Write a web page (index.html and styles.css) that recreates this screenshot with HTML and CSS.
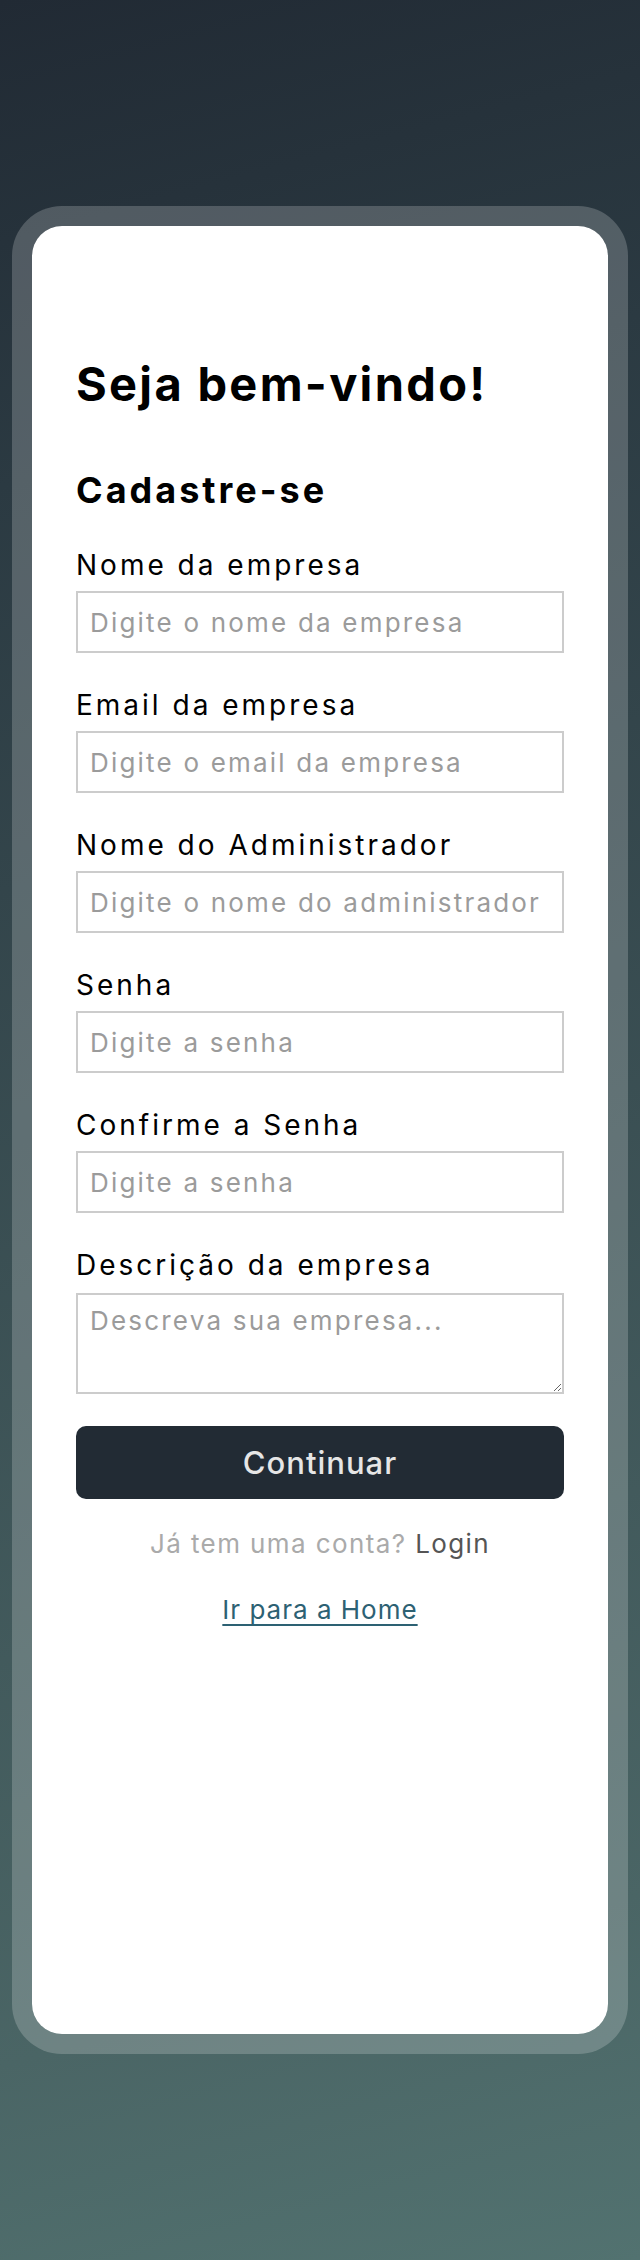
FILE: index.html
```html
<!DOCTYPE html>
<html lang="pt-BR">
<head>
<meta charset="utf-8">
<title>Cadastre-se</title>
<link rel="stylesheet" href="styles.css">
</head>
<body>
<main class="page">
  <section class="frame">
    <h1 class="title">Seja bem-vindo!</h1>
    <h2 class="subtitle">Cadastre-se</h2>
    <form class="form">
      <div class="field">
        <label class="label" for="empresa">Nome da empresa</label>
        <input class="input" id="empresa" type="text" placeholder="Digite o nome da empresa">
      </div>
      <div class="field">
        <label class="label" for="email">Email da empresa</label>
        <input class="input" id="email" type="email" placeholder="Digite o email da empresa">
      </div>
      <div class="field">
        <label class="label" for="admin">Nome do Administrador</label>
        <input class="input" id="admin" type="text" placeholder="Digite o nome do administrador">
      </div>
      <div class="field">
        <label class="label" for="senha">Senha</label>
        <input class="input" id="senha" type="password" placeholder="Digite a senha">
      </div>
      <div class="field">
        <label class="label" for="senha2">Confirme a Senha</label>
        <input class="input" id="senha2" type="password" placeholder="Digite a senha">
      </div>
      <div class="field">
        <label class="label" for="desc">Descrição da empresa</label>
        <textarea class="input textarea" id="desc" placeholder="Descreva sua empresa..."></textarea>
      </div>
      <button class="button" type="button">Continuar</button>
    </form>
    <p class="login">Já tem uma conta? <a class="login-link" href="#">Login</a></p>
    <p class="home"><a class="home-link" href="#">Ir para a Home</a></p>
  </section>
</main>
</body>
</html>
```
FILE: styles.css
```css
* { box-sizing: border-box; }

html, body {
  margin: 0;
  padding: 0;
}

body {
  min-height: 2260px;
  background: linear-gradient(165deg, #212a34 0%, #2b3a42 20%, #4a6565 85%, #527270 100%);
  font-family: "Inter", "Liberation Sans", sans-serif;
  color: #000;
}

.page {
  padding: 206px 12px 0;
}

.frame {
  height: 1848px;
  background: #fff;
  background-clip: padding-box;
  border: 20px solid rgba(255, 255, 255, 0.2);
  border-radius: 50px;
  padding: 130px 44px 0;
}

.title {
  margin: 0;
  font-size: 47px;
  line-height: 56px;
  font-weight: 700;
  letter-spacing: 2.3px;
}

.subtitle {
  margin: 57px 0 0;
  font-size: 36px;
  line-height: 43px;
  font-weight: 700;
  letter-spacing: 3px;
}

.form {
  margin-top: 36px;
  display: flex;
  flex-direction: column;
}

.field {
  display: flex;
  flex-direction: column;
  margin-bottom: 35px;
}

.label {
  font-size: 28px;
  line-height: 34px;
  margin-bottom: 9px;
  letter-spacing: 3px;
}

.input {
  height: 62px;
  border: 2px solid #cccccc;
  border-radius: 0;
  padding: 0 12px;
  font-family: inherit;
  font-size: 26px;
  letter-spacing: 2.2px;
  color: #000;
  background: #fff;
  outline: none;
}

.input::placeholder {
  color: #9b9b9b;
}

.textarea {
  height: 101px;
  padding-top: 10px;
  resize: vertical;
  margin-top: 2px;
}

.field:last-of-type {
  margin-bottom: 32px;
}

.button {
  height: 73px;
  border: 0;
  border-radius: 10px;
  background: #222b34;
  color: #e6e6e6;
  font-family: inherit;
  font-size: 31px;
  font-weight: 500;
  letter-spacing: 1px;
}

.login {
  margin: 28px 0 0;
  text-align: center;
  font-size: 26px;
  line-height: 34px;
  color: #aaaaaa;
  letter-spacing: 1.4px;
}

.login-link {
  color: #555555;
  text-decoration: none;
}

.home {
  margin: 32px 0 0;
  text-align: center;
  font-size: 26px;
  line-height: 34px;
  letter-spacing: 1px;
}

.home-link {
  color: #2d6173;
  text-decoration: underline;
  text-underline-offset: 5px;
}
```
